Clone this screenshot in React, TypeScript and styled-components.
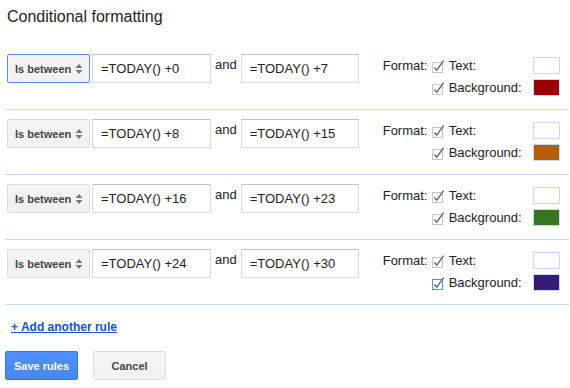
import React from 'react';
import styled, { createGlobalStyle, css } from 'styled-components';

const GlobalStyle = createGlobalStyle`
  html, body {
    margin: 0;
    padding: 0;
    background: #fff;
  }
  body {
    font-family: "Liberation Sans", Arial, sans-serif;
    color: #222;
  }
`;

const Dialog = styled.div`
  width: 570px;
  box-sizing: border-box;
  padding: 0 1px 0 5px;
`;

const Title = styled.h1`
  margin: 0;
  padding: 7px 0 0 2px;
  height: 45px;
  box-sizing: border-box;
  font-size: 16px;
  font-weight: normal;
  line-height: 20px;
  color: #222;
`;

const RuleRow = styled.div`
  display: flex;
  align-items: flex-start;
  padding: 9px 0 13px 2px;
  border-bottom: 1px solid #c6dafc;
`;

const Select = styled.div<{ $focused?: boolean }>`
  display: flex;
  align-items: center;
  justify-content: space-between;
  box-sizing: border-box;
  width: 83px;
  height: 29px;
  padding: 0 6px 0 7px;
  border: 1px solid ${(p) => (p.$focused ? '#4d90fe' : '#dcdcdc')};
  border-radius: 2px;
  background: linear-gradient(#f5f5f5, #f1f1f1);
  font-size: 11px;
  font-weight: bold;
  color: #444;
`;

const Arrows = styled.svg`
  display: block;
`;

const FieldInput = styled.div<{ $w: number; $gap: number }>`
  box-sizing: border-box;
  width: ${(p) => p.$w}px;
  height: 29px;
  margin-left: ${(p) => p.$gap}px;
  padding: 0 8px;
  border: 1px solid #d9d9d9;
  border-top-color: #c0c0c0;
  font-size: 13px;
  line-height: 27px;
  color: #222;
  white-space: nowrap;
`;

const Joiner = styled.span`
  margin: 0 0 0 4px;
  padding-top: 2px;
  font-size: 13px;
  line-height: 18px;
  color: #222;
`;

const FormatBlock = styled.div`
  display: flex;
  align-items: flex-start;
  margin: 3px 0 0 24px;
  width: 177px;
`;

const FormatLabel = styled.span`
  font-size: 13px;
  line-height: 17px;
  width: 49px;
`;

const Options = styled.div`
  display: flex;
  flex-direction: column;
  gap: 5px;
  flex: 1;
`;

const Option = styled.div`
  display: flex;
  align-items: center;
  height: 17px;
  font-size: 13px;
  color: #222;
`;

const OptionText = styled.span`
  margin-left: 4px;
`;

const Swatch = styled.div<{ $color: string }>`
  margin-left: auto;
  box-sizing: border-box;
  width: 27px;
  height: 17px;
  border: 1px solid #c6dafc;
  background: ${(p) => p.$color};
`;

const Footer = styled.div`
  padding: 12px 0 0 0;
`;

const AddLink = styled.a`
  display: inline-block;
  margin-left: 6px;
  font-size: 12px;
  font-weight: bold;
  line-height: 16px;
  color: #15c;
  text-decoration: underline;
  cursor: pointer;
`;

const Buttons = styled.div`
  display: flex;
  gap: 15px;
  margin-top: 16px;
`;

const Button = styled.button<{ $primary?: boolean }>`
  box-sizing: border-box;
  height: 29px;
  min-width: 72px;
  padding: 0 8px;
  border-radius: 2px;
  font-family: "Liberation Sans", Arial, sans-serif;
  font-size: 11px;
  font-weight: bold;
  ${(p) =>
    p.$primary
      ? css`
          background: linear-gradient(#4d90fe, #4787ed);
          border: 1px solid #3079ed;
          color: #fff;
        `
      : css`
          min-width: 73px;
          background: linear-gradient(#f5f5f5, #f1f1f1);
          border: 1px solid #dcdcdc;
          color: #444;
        `}
`;

function UpDown() {
  return (
    <Arrows width="8" height="12" viewBox="0 0 8 12">
      <path d="M4 1 L7.5 5 H0.5 Z" fill="#777" />
      <path d="M4 11 L7.5 7 H0.5 Z" fill="#777" />
    </Arrows>
  );
}

function Check({ focused }: { focused?: boolean }) {
  return (
    <svg width="13" height="14" viewBox="0 0 13 14" style={{ display: 'block' }}>
      <rect x="0.5" y="3.5" width="10" height="10" fill="#fff" stroke={focused ? '#4d90fe' : '#c6c6c6'} />
      <path d="M2.3 8.6 L4.8 11.2 L11.6 1.6" fill="none" stroke="#666" strokeWidth="1.4" />
    </svg>
  );
}

type Rule = { from: string; to: string; bg: string };

const rules: Rule[] = [
  { from: '=TODAY() +0', to: '=TODAY() +7', bg: '#990000' },
  { from: '=TODAY() +8', to: '=TODAY() +15', bg: '#b45f06' },
  { from: '=TODAY() +16', to: '=TODAY() +23', bg: '#38761d' },
  { from: '=TODAY() +24', to: '=TODAY() +30', bg: '#351c75' },
];

export default function App() {
  return (
    <>
      <GlobalStyle />
      <Dialog>
        <Title>Conditional formatting</Title>
        {rules.map((r, i) => (
          <RuleRow key={i}>
            <Select $focused={i === 0}>
              <span>Is between</span>
              <UpDown />
            </Select>
            <FieldInput $w={119} $gap={2}>{r.from}</FieldInput>
            <Joiner>and</Joiner>
            <FieldInput $w={118} $gap={4}>{r.to}</FieldInput>
            <FormatBlock>
              <FormatLabel>Format:</FormatLabel>
              <Options>
                <Option>
                  <Check />
                  <OptionText>Text:</OptionText>
                  <Swatch $color="#fff" />
                </Option>
                <Option>
                  <Check focused={i === rules.length - 1} />
                  <OptionText>Background:</OptionText>
                  <Swatch $color={r.bg} />
                </Option>
              </Options>
            </FormatBlock>
          </RuleRow>
        ))}
        <Footer>
          <AddLink>+ Add another rule</AddLink>
          <Buttons>
            <Button $primary>Save rules</Button>
            <Button>Cancel</Button>
          </Buttons>
        </Footer>
      </Dialog>
    </>
  );
}
